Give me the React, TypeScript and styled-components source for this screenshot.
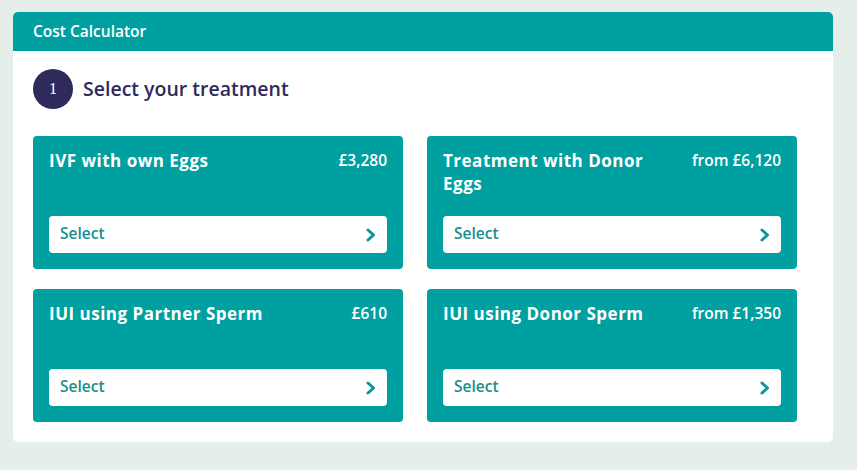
import React from "react";
import styled, { createGlobalStyle } from "styled-components";

type Treatment = {
  id: number,
  title: string,
  price: string
}

const treatments: Treatment[] = [
  { id: 1, title: "IVF with own Eggs", price: "£3,280" },
  { id: 2, title: "Treatment with Donor Eggs", price: "from £6,120" },
  { id: 3, title: "IUI using Partner Sperm", price: "£610" },
  { id: 4, title: "IUI using Donor Sperm", price: "from £1,350" },
];

const Chevron = () => (
  <svg width="12" height="14" viewBox="0 0 12 14">
    <path d="M3 2 L8.5 7 L3 12" fill="none" stroke="#0f9494" strokeWidth="3" strokeLinecap="round" strokeLinejoin="round" />
  </svg>
);

const App: React.FC = () => {
  return (
    <>
      <GlobalStyle />
      <StyledPage>
        <StyledCalculator>
          <StyledHeader>Cost Calculator</StyledHeader>
          <StyledBody>
            <StyledStep>
              <StyledStepNumber>1</StyledStepNumber>
              <StyledStepTitle>Select your treatment</StyledStepTitle>
            </StyledStep>
            <StyledGrid>
              {treatments.map((t) => (
                <StyledCard key={t.id}>
                  <StyledCardTop>
                    <StyledCardTitle>{t.title}</StyledCardTitle>
                    <StyledCardPrice>{t.price}</StyledCardPrice>
                  </StyledCardTop>
                  <StyledSelectButton>
                    <StyledSelectLabel>Select</StyledSelectLabel>
                    <Chevron />
                  </StyledSelectButton>
                </StyledCard>
              ))}
            </StyledGrid>
          </StyledBody>
        </StyledCalculator>
      </StyledPage>
    </>
  );
};

export default App;

const GlobalStyle = createGlobalStyle`
  html, body {
    margin: 0;
    padding: 0;
    background: #e6eeea;
    font-family: "Open Sans", Lato, sans-serif;
  }
`;
const StyledPage = styled.div`
  width: 857px;
  height: 470px;
  padding: 12px 24px 0 13px;
  box-sizing: border-box;
`;
const StyledCalculator = styled.div`
  width: 820px;
  background: #fff;
  border-radius: 5px;
  overflow: hidden;
`;
const StyledHeader = styled.div`
  height: 39px;
  background: #00a0a0;
  color: #fff;
  font-size: 15.5px;
  font-weight: 600;
  display: flex;
  align-items: center;
  padding: 0 20px 1px;
  box-sizing: border-box;
`;
const StyledBody = styled.div`
  padding: 18px 36px 20px 20px;
`;
const StyledStep = styled.div`
  display: flex;
  align-items: center;
  gap: 10px;
`;
const StyledStepNumber = styled.div`
  width: 40px;
  height: 40px;
  border-radius: 50%;
  background: #2e2a5c;
  color: #fff;
  font-family: "Liberation Serif", serif;
  font-size: 16px;
  display: flex;
  align-items: center;
  justify-content: center;
`;
const StyledStepTitle = styled.h2`
  margin: 0 0 2px;
  font-size: 19.5px;
  font-weight: 600;
  color: #2e2a5c;
`;
const StyledGrid = styled.div`
  margin-top: 27px;
  display: grid;
  grid-template-columns: 370px 370px;
  column-gap: 24px;
  row-gap: 20px;
`;
const StyledCard = styled.div`
  height: 133px;
  box-sizing: border-box;
  background: #00a0a0;
  border-radius: 4px;
  padding: 13px 16px 16px 16px;
  display: flex;
  flex-direction: column;
  justify-content: space-between;
`;
const StyledCardTop = styled.div`
  display: flex;
  justify-content: space-between;
  align-items: flex-start;
  gap: 20px;
`;
const StyledCardTitle = styled.div`
  color: #fff;
  font-size: 17px;
  font-weight: 700;
  letter-spacing: 0.5px;
  line-height: 23px;
  max-width: 215px;
`;
const StyledCardPrice = styled.div`
  color: #fff;
  font-size: 15.5px;
  font-weight: 600;
  line-height: 23px;
  white-space: nowrap;
`;
const StyledSelectButton = styled.div`
  height: 37px;
  background: #fff;
  border-radius: 4px;
  padding: 0 10px 0 11px;
  display: flex;
  align-items: center;
  justify-content: space-between;
`;
const StyledSelectLabel = styled.span`
  color: #188e8e;
  font-size: 15.5px;
  font-weight: 600;
  margin-bottom: 4px;
`;
